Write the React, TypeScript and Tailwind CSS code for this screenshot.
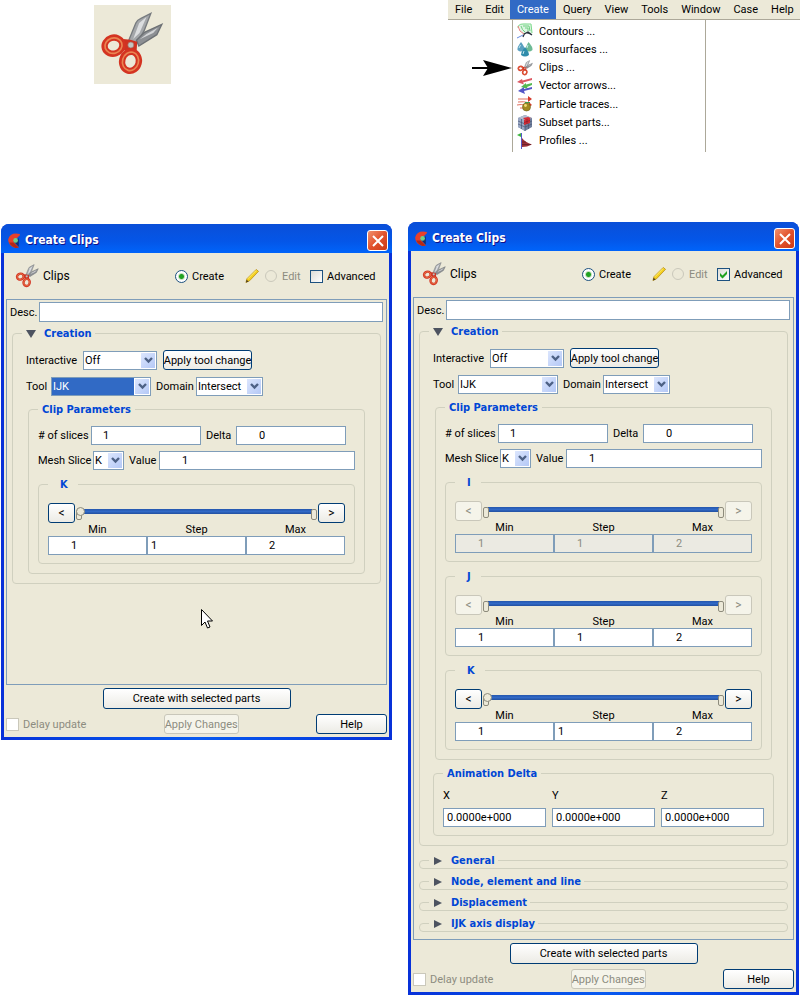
import type { ReactNode } from "react";

export default function App() {
  return (
    <main className="grid grid-cols-2 items-start gap-x-4 bg-white px-px font-[Roboto,'DejaVu_Sans_Condensed',sans-serif] text-[11px] leading-[15px] text-black">
      <div className="pt-[5px] pl-[93px]">
        <div className="h-[79px] w-[77px] bg-[#ece9d8]">
          <Scissors viewBox="42 14 228 237" className="h-full w-full" />
        </div>
      </div>
      <div className="-mr-px pb-[70px] pl-10">
        <MenuBar />
      </div>
      <div className="pt-0.5">
        <ClipsDialog id="basic" />
      </div>
      <ClipsDialog id="advanced" advanced />
    </main>
  );
}

const menus = ["File", "Edit", "Create", "Query", "View", "Tools", "Window", "Case", "Help"];

function MenuBar() {
  const items = [
    { icon: <ContoursIcon />, text: "Contours ..." },
    { icon: <DropsIcon />, text: "Isosurfaces ..." },
    { icon: <Scissors viewBox="58 34 190 194" className="h-4 w-4" />, text: "Clips ..." },
    { icon: <VectorsIcon />, text: "Vector arrows..." },
    { icon: <ParticlesIcon />, text: "Particle traces..." },
    { icon: <SubsetIcon />, text: "Subset parts..." },
    { icon: <ProfilesIcon />, text: "Profiles ..." },
  ];
  return (
    <div>
      <nav className="flex h-5 overflow-hidden border-b border-[#aca899] bg-[#ece9d8]">
        {menus.map((m) => (
          <button
            key={m}
            type="button"
            className={m === "Create" ? "h-[19px] shrink-0 bg-[#316ac5] px-[7px] text-white" : "h-[19px] shrink-0 pr-[6px] pl-[7px]"}
          >
            {m}
          </button>
        ))}
      </nav>
      <div className="flex">
        <div className="w-16 pt-[40px] pl-6">
          <svg viewBox="0 0 40 16" className="h-4 w-10">
            <path d="M0 8h16" stroke="#000" strokeWidth="2" />
            <path d="M40 8 11 0l5 8-5 8z" />
          </svg>
        </div>
        <ul className="flex min-h-[132px] w-[194px] flex-col justify-between border-x border-[#aca899] py-0.5">
          {items.map((item) => (
            <li key={item.text}>
              <button type="button" className="flex h-[18px] w-full items-center gap-[6px] pl-1 text-left">
                {item.icon}
                {item.text}
              </button>
            </li>
          ))}
        </ul>
      </div>
    </div>
  );
}

function ClipsDialog({ id, advanced = false }: { id: string; advanced?: boolean }) {
  return (
    <section className="rounded-t-lg bg-[#0a4be0] bg-linear-to-r from-[#0831d9] via-[#0a5af0] to-[#0831d9] px-[3px] pb-[3px]">
      <header className="-mx-[3px] flex h-[29px] items-center rounded-t-lg bg-linear-to-b from-[#0a4fd8] via-[#0456e8] via-60% to-[#0064fa] pt-1 pr-1 pl-[6px]">
        <AppLogo />
        <h2 className="ml-1 flex-1 font-['DejaVu_Sans_Condensed',sans-serif] text-[12px] font-bold text-white [text-shadow:1px_1px_#0f1089]">
          Create Clips
        </h2>
        <button
          type="button"
          aria-label="Close"
          className="flex h-[21px] w-[21px] items-center justify-center rounded-[3px] border border-white bg-linear-to-br from-[#f0906c] via-[#e2522c] to-[#cc3a16]"
        >
          <svg viewBox="0 0 12 12" className="h-3 w-3">
            <path d="m1 1 10 10M11 1 1 11" stroke="#fff" strokeWidth="2" />
          </svg>
        </button>
      </header>

      <div className="bg-[#ece9d8] px-0.5 pb-[3px]">
        <div className="flex h-[46px] items-center pr-[14px] pl-[9px]">
          <Scissors viewBox="58 34 190 194" className="h-6 w-6" />
          <span className="ml-1 flex-1 text-[12px]">Clips</span>
          <label className="flex items-center gap-1">
            <input type="radio" name={`${id}-mode`} defaultChecked className={radio} />
            <span className="w-8">Create</span>
          </label>
          <PencilIcon />
          <label className="mr-[10px] flex items-center gap-1 text-[#8c8c80]">
            <input
              type="radio"
              name={`${id}-mode`}
              disabled
              className="mx-px h-3 w-3 appearance-none rounded-full border border-[#cac8bb]"
            />
            <span className="w-[18px]">Edit</span>
          </label>
          <label className="flex items-center gap-1">
            <span className="relative flex">
              <input
                type="checkbox"
                defaultChecked={advanced}
                className="h-[13px] w-[13px] appearance-none border border-[#1c5180] bg-linear-to-br from-[#dcdcd7] to-white"
              />
              {advanced && (
                <svg viewBox="0 0 13 13" className="pointer-events-none absolute inset-0 h-[13px] w-[13px]">
                  <path d="M3 5v3l2.500 2.500L10 6V3L5.500 7.500z" fill="#21a121" />
                </svg>
              )}
            </span>
            <span className="w-[46px]">Advanced</span>
          </label>
        </div>

        <div className="relative min-h-[386px] border border-[#7f9db9] px-[3px] pt-[2px] pb-[7px]">
          <div className="flex items-center gap-1">
            <label htmlFor={`${id}-desc`} className="w-[25px]">
              Desc.
            </label>
            <input id={`${id}-desc`} className="h-5 min-w-0 flex-1 border border-[#7f9db9] bg-white px-1" />
          </div>

          <div className="mt-1 px-[2px]">
            <Group title={<Disclosure open title="Creation" />} legend="-ml-1 pl-1 pr-[3px]" className="px-[13px] pt-[9px] pb-[9px]">
              <div className="flex items-center gap-[6px]">
                <label htmlFor={`${id}-interactive`} className="w-[51px]">
                  Interactive
                </label>
                <Select id={`${id}-interactive`} value="Off" className="w-[74px]" />
                <Button className="h-5 w-[89px]">Apply tool change</Button>
              </div>
              <div className="mt-[7px] flex items-center gap-[5px]">
                <label htmlFor={`${id}-tool`} className="w-5">
                  Tool
                </label>
                <Select id={`${id}-tool`} value="IJK" className="w-[100px]" focused={!advanced} />
                <label htmlFor={`${id}-domain`} className="w-[35px]">
                  Domain
                </label>
                <Select id={`${id}-domain`} value="Intersect" className="w-[67px]" />
              </div>

              <Group title="Clip Parameters" legend="px-1" className="mx-0.5 mt-[6px] px-[9px] pt-[9px] pb-[9px]">
                <div className="flex items-center gap-[5px] pr-[9px]">
                  <label htmlFor={`${id}-slices`} className="w-12 whitespace-nowrap">
                    # of slices
                  </label>
                  <Field id={`${id}-slices`} value="1" className="flex-1 px-[11px]" />
                  <label htmlFor={`${id}-delta`} className="w-[25px]">
                    Delta
                  </label>
                  <Field id={`${id}-delta`} value="0" className="flex-1 pl-[22px]" />
                </div>
                <div className="mt-[6px] flex items-center gap-[5px]">
                  <label htmlFor={`${id}-axis`} className="w-[50px] whitespace-nowrap">
                    Mesh Slice
                  </label>
                  <Select id={`${id}-axis`} value="K" className="w-[31px]" />
                  <label htmlFor={`${id}-value`} className="w-[25px]">
                    Value
                  </label>
                  <Field id={`${id}-value`} value="1" className="flex-1 pl-[22px]" />
                </div>
                {advanced && <AxisRange id={`${id}-i`} axis="I" locked disabled />}
                {advanced && <AxisRange id={`${id}-j`} axis="J" locked />}
                <AxisRange id={`${id}-k`} axis="K" />
              </Group>

              {advanced && (
                <Group title="Animation Delta" legend="px-1" className="mt-[6px] grid grid-cols-3 gap-x-[6px] px-[9px] pt-[7px] pb-[8px]">
                  {["X", "Y", "Z"].map((axis) => (
                    <div key={axis}>
                      <label htmlFor={`${id}-anim-${axis}`} className="block h-5">
                        {axis}
                      </label>
                      <Field id={`${id}-anim-${axis}`} value="0.0000e+000" className="w-full pl-[3px]" />
                    </div>
                  ))}
                </Group>
              )}
            </Group>

            {advanced && (
              <div className="pt-[2px]">
                {["General", "Node, element and line", "Displacement", "IJK axis display"].map((title) => (
                  <Group key={title} title={<Disclosure title={title} />} legend="ml-[9px] pl-1 pr-[3px]" className="mt-[5px]" />
                ))}
              </div>
            )}
          </div>

          {/* mouse pointer resting over the empty part of the panel */}
          {!advanced && (
            <svg viewBox="0 0 12 20" className="absolute top-[309px] left-[194px] h-5 w-3">
              <path d="M.5.5v16L4 13l2.500 6 2.500-1-2.500-6h5z" fill="#fff" stroke="#000" />
            </svg>
          )}
        </div>

        <div className="mt-[3px] flex justify-center">
          <Button className="h-[21px] w-[188px]">Create with selected parts</Button>
        </div>
        <div className="mt-[5px] flex items-center justify-between">
          <label className="flex items-center gap-1 text-[#8c8c80]">
            <input type="checkbox" disabled className="h-[13px] w-[13px] appearance-none border border-[#cac8bb] bg-white" />
            Delay update
          </label>
          <Button disabled className="h-5 w-[75px]">
            Apply Changes
          </Button>
          <Button className="h-5 w-[71px]">Help</Button>
        </div>
      </div>
    </section>
  );
}

const radio =
  "h-[13px] w-[13px] appearance-none rounded-full border border-[#1c5180] bg-[radial-gradient(circle,#21a121_0_2px,#c8e0c0_3px,#ffffff_4px)]";

function Group({ title, legend, className, children }: { title: ReactNode; legend: string; className: string; children?: ReactNode }) {
  return (
    <fieldset className={`min-w-0 rounded-[4px] border border-[#d0d0bf] ${className}`}>
      <legend className={`h-[15px] font-['DejaVu_Sans_Condensed',sans-serif] font-bold text-[#0046d5] ${legend}`}>{title}</legend>
      {children}
    </fieldset>
  );
}

function Disclosure({ title, open = false }: { title: string; open?: boolean }) {
  return (
    <button type="button" aria-expanded={open} className="flex items-center gap-2">
      <svg viewBox="0 0 10 10" className="h-[10px] w-[10px]" fill="#4d5360">
        {open ? <path d="M0 1h10L5 9z" /> : <path d="M1 1v8l8-4z" />}
      </svg>
      {title}
    </button>
  );
}

function Button({ className, disabled, label, children }: { className: string; disabled?: boolean; label?: string; children: ReactNode }) {
  return (
    <button
      type="button"
      disabled={disabled}
      aria-label={label}
      className={`flex shrink-0 items-center justify-center rounded-[3px] border border-[#003c74] bg-linear-to-b from-white to-[#ecebe5] whitespace-nowrap disabled:border-[#c9c7ba] disabled:from-[#f5f4ea] disabled:to-[#f5f4ea] disabled:text-[#8c8c80] ${className}`}
    >
      {children}
    </button>
  );
}

function Select({ id, value, className, focused = false }: { id: string; value: string; className: string; focused?: boolean }) {
  return (
    <span className={`relative flex h-[19px] shrink-0 ${className}`}>
      <select
        id={id}
        defaultValue={value}
        className={`h-full w-full appearance-none border border-[#7f9db9] pl-px ${focused ? "bg-[#316ac5] text-white" : "bg-white"}`}
      >
        <option>{value}</option>
      </select>
      <span className="pointer-events-none absolute top-px right-px bottom-px flex w-4 items-center justify-center border border-white bg-linear-to-br from-[#dce6fd] to-[#b4c8f6]">
        <svg viewBox="0 0 9 7" className="h-[7px] w-[9px]">
          <path d="m1 1 3.500 3.500L8 1" fill="none" stroke="#4d6185" strokeWidth="2.400" />
        </svg>
      </span>
    </span>
  );
}

function Field({ id, value, className, disabled }: { id: string; value: string; className: string; disabled?: boolean }) {
  return (
    <input
      id={id}
      defaultValue={value}
      disabled={disabled}
      className={`h-[19px] min-w-0 border border-[#7f9db9] bg-white disabled:bg-[#ebeae2] disabled:text-[#8c8c80] ${className}`}
    />
  );
}

function AxisRange({ id, axis, locked = false, disabled = false }: { id: string; axis: string; locked?: boolean; disabled?: boolean }) {
  const cap = "absolute top-[6px] h-[11px] w-[6px] rounded-[2px] border border-[#8d8b7c] bg-[#ece9d8]";
  return (
    <Group title={axis} legend="pl-3 pr-[10px]" className="mt-[7px] px-[9px] pt-[11px] pb-2">
      <div className="flex items-center">
        <Button className="h-5 w-[27px] text-[12px]" disabled={locked} label={`${axis} previous`}>
          &lt;
        </Button>
        <span className="relative mx-px h-5 flex-1">
          <span className="absolute inset-x-[5px] top-[6px] h-[5px] bg-linear-to-b from-[#2456ad] via-[#3169c6] to-[#2250a0]" />
          <span className={`${cap} left-0`} />
          <span className={`${cap} right-0`} />
          <input
            type="range"
            aria-label={`${axis} slice`}
            min={1}
            max={2}
            defaultValue={1}
            disabled={locked}
            className="absolute inset-x-0 top-0 h-4 w-full appearance-none bg-transparent [&::-webkit-slider-thumb]:h-[9px] [&::-webkit-slider-thumb]:w-[9px] [&::-webkit-slider-thumb]:appearance-none [&::-webkit-slider-thumb]:rounded-full [&::-webkit-slider-thumb]:border [&::-webkit-slider-thumb]:border-[#8d8b7c] [&::-webkit-slider-thumb]:bg-[#ece9d8] disabled:[&::-webkit-slider-thumb]:opacity-0"
          />
        </span>
        <Button className="h-5 w-[27px] text-[12px]" disabled={locked} label={`${axis} next`}>
          &gt;
        </Button>
      </div>
      <div className="grid grid-cols-3 text-center leading-[13px]">
        <label htmlFor={`${id}-min`}>Min</label>
        <label htmlFor={`${id}-step`}>Step</label>
        <label htmlFor={`${id}-max`}>Max</label>
        <Field id={`${id}-min`} value="1" disabled={disabled} className="pl-[22px]" />
        <Field id={`${id}-step`} value="1" disabled={disabled} className={locked ? "pl-[22px]" : "pl-[3px]"} />
        <Field id={`${id}-max`} value="2" disabled={disabled} className="pl-[22px]" />
      </div>
    </Group>
  );
}

function Scissors({ viewBox, className }: { viewBox: string; className: string }) {
  return (
    <svg viewBox={viewBox} className={`shrink-0 ${className}`}>
      <path d="M144 122 166 68q4-9 14-13l31-16-20 52-22 38z" fill="#a4a7aa" stroke="#777b7f" strokeWidth="4" />
      <path d="m158 116 18-48 22-18-21 48z" fill="#dcdee0" />
      <path d="m168 120 24-24 52-24-15 31-54 34z" fill="#8d9094" stroke="#6d7175" strokeWidth="4" />
      <path d="m178 117 20-16 34-19-14 16z" fill="#d2d4d6" />
      <path d="M128 116q22 0 42 8l-2 34q-28 4-38-10z" fill="#cf3222" />
      <g fill="none">
        <ellipse cx="99" cy="136" rx="27" ry="24" transform="rotate(-18 99 136)" stroke="#d43422" strokeWidth="19" />
        <ellipse cx="99" cy="136" rx="26" ry="23" transform="rotate(-18 99 136)" stroke="#ea8552" strokeWidth="5" />
        <ellipse cx="150" cy="183" rx="25" ry="29" transform="rotate(15 150 183)" stroke="#d43422" strokeWidth="19" />
        <ellipse cx="150" cy="183" rx="24" ry="28" transform="rotate(15 150 183)" stroke="#ea8552" strokeWidth="5" />
      </g>
      <circle cx="151" cy="134" r="9" fill="#c3c5c2" stroke="#a56b5c" strokeWidth="2" />
    </svg>
  );
}

function AppLogo() {
  return (
    <svg viewBox="0 0 13 15" className="h-4 w-[14px] shrink-0">
      <path d="M11 5v8L6 8z" fill="#14306e" />
      <path d="M12 1Q3-1 1 6q0 6 7 8l3-.5L6 8l6-6z" fill="#e8402a" />
      <path d="M2 9q2 4 6 5l3-.5L6 9z" fill="#b02a18" />
      <circle cx="8" cy="7" r="2.200" fill="#6fd08a" />
    </svg>
  );
}

function PencilIcon() {
  return (
    <svg viewBox="0 0 15 16" className="mr-[5px] ml-[21px] h-4 w-[14px] shrink-0">
      <path d="m1 15 1-4L12 1l2.500 2L5 13z" fill="#f4cf20" stroke="#b48a14" strokeWidth=".8" />
      <path d="m3 11 9-9" stroke="#fff27a" />
      <path d="m1 15 .7-3L4 14z" fill="#4a3c20" />
    </svg>
  );
}

function ContoursIcon() {
  return (
    <svg viewBox="0 0 16 16" className="h-4 w-4 shrink-0" fill="none">
      <path d="M2 2q6-3 12 0l1 9q-5-4-8 1-4-3-5-10z" fill="#dcf5e2" />
      <path d="M1 5q0-4 5-4h8l1 9" stroke="#7bd98a" />
      <path d="M1 3q1 6 6 8" stroke="#ec7d7d" />
      <path d="M4 3q1 4 4 6M6 3h6l1 5M8 5h3v3" stroke="#6fcf80" />
      <path d="M6 14q2-7 9-2M7 11l4-2 4 3" stroke="#27303c" strokeWidth="1.200" />
      <path d="m0 15 6-3" stroke="#668ae0" />
    </svg>
  );
}

function DropsIcon() {
  return (
    <svg viewBox="0 0 16 16" className="h-4 w-4 shrink-0">
      <path d="M4 1q4 5 3.500 8-3.500 3-7 0Q0 6 4 1z" fill="#5aa0c0" />
      <path d="M11.500 1q4.500 5 4 8-3.500 3-7 0 0-3 3-8z" fill="#6dba95" />
      <path d="M8 6q4 5 4 8-4 3-8 0 0-3 4-8z" fill="#2f8cab" />
      <path d="M3.500 4 2 7m9-3-1 3m-3 3-1 3" stroke="#c3e7ed" />
    </svg>
  );
}

function VectorsIcon() {
  return (
    <svg viewBox="0 0 16 16" className="h-4 w-4 shrink-0">
      <path d="m0 4 5-3 .500 1.500L15 0v2L6 4.500l1 2z" fill="#dd5963" />
      <path d="m4 9 5-4v1.500L15 5v2l-5 2 1 2z" fill="#54b951" />
      <path d="m1 13 6-4v2l8-2v2l-8 2 1 3z" fill="#5356c7" />
    </svg>
  );
}

function ParticlesIcon() {
  return (
    <svg viewBox="0 0 16 16" className="h-4 w-4 shrink-0" fill="none">
      <path d="M1 3h11M1 6q5-1 12 1M0 9q5-1 7 0M3 12h4" stroke="#e0705f" />
      <path d="m11 0 4 3-4 3m1 0 3 3-3 2z" fill="#d63a2c" />
      <circle cx="9.500" cy="11" r="4" fill="#a18a22" stroke="#6b5c16" strokeWidth=".6" />
      <circle cx="8.500" cy="9.500" r="1.400" fill="#f0dc72" />
      <path d="M8 6.500h5" stroke="#3c9c4c" />
    </svg>
  );
}

function SubsetIcon() {
  return (
    <svg viewBox="0 0 16 16" className="h-4 w-4 shrink-0">
      <path d="m1 3 7-3 7 3v9l-7 4-7-4z" fill="#6f7e9c" />
      <path d="m1 3 7 2v11l-7-4z" fill="#9aa8c4" />
      <path d="m1 3 7-3 7 3-7 2z" fill="#b4bfd3" />
      <path d="M1 6l7 3 7-3M1 9l7 3 7-3M4.500 4v10M8 5v11m3.500-12v10" fill="none" stroke="#465473" strokeWidth=".7" />
      <path d="m7 5 6-2v5l-6 2zM6 3l5-1 3 1-6 2z" fill="#d42e36" />
      <path d="M7 7.500 13 5.500M10 4v5" stroke="#7c1a28" strokeWidth=".6" />
    </svg>
  );
}

function ProfilesIcon() {
  return (
    <svg viewBox="0 0 16 16" className="h-4 w-4 shrink-0">
      <path d="M5 5q3 4 10 6.500Q10 14 5 14z" fill="#9c3038" />
      <path d="M5 9h4M5 11.500h9" stroke="#5c1c24" strokeWidth=".7" />
      <path d="M4.500 0v16" stroke="#5758c8" />
      <path d="m0 2 4-2v4z" fill="#3db53d" />
    </svg>
  );
}
